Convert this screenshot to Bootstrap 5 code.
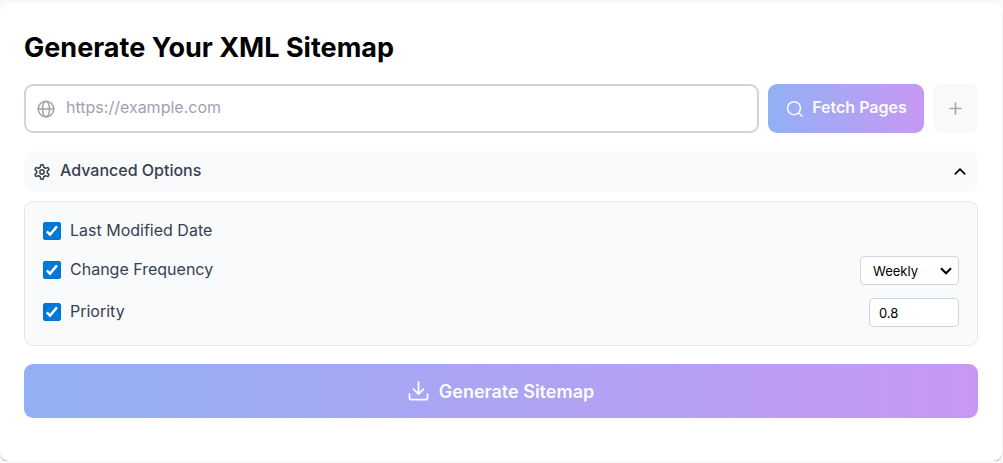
<!DOCTYPE html>
<html lang="en">
<head>
<meta charset="utf-8">
<meta name="viewport" content="width=device-width, initial-scale=1">
<title>Generate Your XML Sitemap</title>
<link href="https://cdn.jsdelivr.net/npm/bootstrap@5.3.0/dist/css/bootstrap.min.css" rel="stylesheet">
<style>
  body { font-family: Inter, "Liberation Sans", sans-serif; font-size: 16px; line-height: 21px; background: #f8f9fa; color: #374151; }
  .sitemap-card { margin: 3px 1px 0 0; padding: 27px 24px 43px; border-radius: 9px; box-shadow: 0 2px 2px -1px rgba(0,0,0,.35); }
  .sitemap-title { font-size: 27px; line-height: 36px; font-weight: 700; color: #000; margin-bottom: 18px; }
  .tool-row { gap: 9px; margin-bottom: 18px; }
  .url-box { height: 49px; gap: 11px; padding: 0 11px; border: 2px solid #d1d5db; border-radius: 9px; color: #9ca3af; }
  .url-box input { padding: 0 0 3px; }
  .url-box input::placeholder { color: #9ca3af; opacity: 1; }
  .btn-gradient, .btn-gradient:hover { border: 0; border-radius: 9px; color: #fbfbff; font-weight: 600; background: linear-gradient(to right, #92b0f5, #c798f3); }
  .btn-fetch { width: 156px; gap: 9px; font-size: 16px; }
  .btn-fetch span { padding-bottom: 3px; }
  .btn-plus { width: 45px; border: 0; border-radius: 9px; background: #f9f9f9; color: #a5a8ae; }
  .btn-advanced { height: 41px; padding: 0 9px; border: 0; border-radius: 9px; background: #f9fafb; color: #374151; font-weight: 500; margin-bottom: 9px; }
  .btn-advanced span { gap: 9px; }
  .btn-advanced b { font-weight: 500; padding-bottom: 3px; }
  .options-panel { gap: 13px; padding: 18px; border: 1px solid #e5e7eb; border-radius: 9px; background: #f9fafb; margin-bottom: 18px; }
  .option-label { gap: 9px; }
  .option-label span { padding-bottom: 2px; }
  .option-label input { appearance: none; width: 18px; height: 18px; margin: 0 0 1px; border: 1px solid #0075d7; border-radius: 2px; background: #fff; }
  .option-label input:checked { background: #0078d7 url("data:image/svg+xml,%3Csvg xmlns='http://www.w3.org/2000/svg' viewBox='0 0 16 16'%3E%3Cpath d='M2.8 8.3 6 11.6 13 3.4' fill='none' stroke='white' stroke-width='2.4'/%3E%3C/svg%3E") center / 16px no-repeat; }
  .field { height: 29px; border: 1px solid #d1d5db; border-radius: 4px; background-color: #fff; color: #000; font-size: 13px; line-height: 20px; }
  .field-select { appearance: none; width: 99px; padding: 0 24px 0 12px; background: #fff url("data:image/svg+xml,%3Csvg xmlns='http://www.w3.org/2000/svg' viewBox='0 0 12 8'%3E%3Cpath d='M1 1.3 6 6.3 11 1.3' fill='none' stroke='black' stroke-width='2'/%3E%3C/svg%3E") right 6px center / 12px 8px no-repeat; }
  .field-number { width: 90px; padding: 0 9px; }
  .btn-generate { height: 54px; gap: 9px; font-size: 18px; line-height: 27px; }
  svg { flex: none; fill: none; stroke: currentColor; stroke-linecap: round; stroke-linejoin: round; }
</style>
</head>
<body>
<main class="sitemap-card bg-white">
  <h1 class="sitemap-title">Generate Your XML Sitemap</h1>
  <form>
    <div class="tool-row d-flex">
      <label class="url-box d-flex align-items-center flex-grow-1 bg-white">
        <svg width="18" height="18" viewBox="0 0 18 18" stroke-width="1.5" aria-hidden="true"><circle cx="9" cy="9" r="7.8"/><ellipse cx="9" cy="9" rx="3.5" ry="7.8"/><path d="M1.2 9h15.6"/></svg>
        <input type="url" class="border-0 w-100 bg-transparent" placeholder="https://example.com" aria-label="Website URL">
      </label>
      <button type="button" class="btn btn-gradient btn-fetch d-flex align-items-center justify-content-center p-0">
        <svg width="18" height="18" viewBox="0 0 18 18" stroke-width="1.5" aria-hidden="true"><circle cx="9" cy="8.2" r="6.5"/><path d="m13.8 13 3.2 3.2"/></svg>
        <span>Fetch Pages</span>
      </button>
      <button type="button" class="btn btn-plus d-flex align-items-center justify-content-center p-0" aria-label="Add URL">
        <svg width="13" height="13" viewBox="0 0 13 13" stroke-width="1.7" aria-hidden="true"><path d="M6.5 1v11M1 6.5h11"/></svg>
      </button>
    </div>
    <button type="button" class="btn btn-advanced w-100 d-flex align-items-center justify-content-between" aria-expanded="true" aria-controls="options">
      <span class="d-flex align-items-center">
        <svg width="18" height="18" viewBox="0 0 24 24" stroke-width="2" aria-hidden="true"><path d="M9.6 5.7 10.300 3q.2-.7.9-.7h1.600q.7 0 .9.700l.7 2.700 2.200 1.300 2.700-.8q.7-.2 1 .4l.8 1.400q.4.600-.1 1.100l-2 1.700v2.400l2 1.700q.5.500.1 1.100l-.8 1.400q-.3.600-1 .4l-2.700-.8-2.200 1.300-.7 2.700q-.2.700-.9.700h-1.600q-.7 0-.9-.7l-.7-2.700-2.200-1.300-2.700.8q-.7.200-1-.4l-.8-1.400q-.4-.6.1-1.100l2-1.700v-2.400l-2-1.700q-.5-.5-.1-1.100l.8-1.400q.3-.6 1-.4l2.700.8Z"/><circle cx="12" cy="12" r="2.900"/></svg>
        <b>Advanced Options</b>
      </span>
      <svg class="text-black" width="18" height="18" viewBox="0 0 18 18" stroke-width="1.7" aria-hidden="true"><path d="m4.3 10.800 4.700-4.700 4.700 4.700"/></svg>
    </button>
    <div id="options" class="options-panel d-flex flex-column">
      <label class="option-label d-flex align-items-center"><input type="checkbox" checked><span>Last Modified Date</span></label>
      <div class="d-flex align-items-center justify-content-between">
        <label class="option-label d-flex align-items-center"><input type="checkbox" checked><span>Change Frequency</span></label>
        <select class="field field-select" aria-label="Change frequency value"><option>Daily</option><option selected>Weekly</option><option>Monthly</option></select>
      </div>
      <div class="d-flex align-items-center justify-content-between">
        <label class="option-label d-flex align-items-center"><input type="checkbox" checked><span>Priority</span></label>
        <input type="number" class="field field-number" value="0.8" min="0" max="1" step="0.1" aria-label="Priority value">
      </div>
    </div>
    <button type="submit" class="btn btn-gradient btn-generate w-100 d-flex align-items-center justify-content-center p-0">
      <svg width="22" height="22" viewBox="0 0 22 22" stroke-width="1.8" aria-hidden="true"><path d="M10.500 2v12.200M5.500 9.200l5 5 5-5M1.500 14.200v3.500q0 2 2 2h14q2 0 2-2v-3.500"/></svg>
      <span>Generate Sitemap</span>
    </button>
  </form>
</main>
<script src="https://cdn.jsdelivr.net/npm/bootstrap@5.3.0/dist/js/bootstrap.bundle.min.js"></script>
</body>
</html>
